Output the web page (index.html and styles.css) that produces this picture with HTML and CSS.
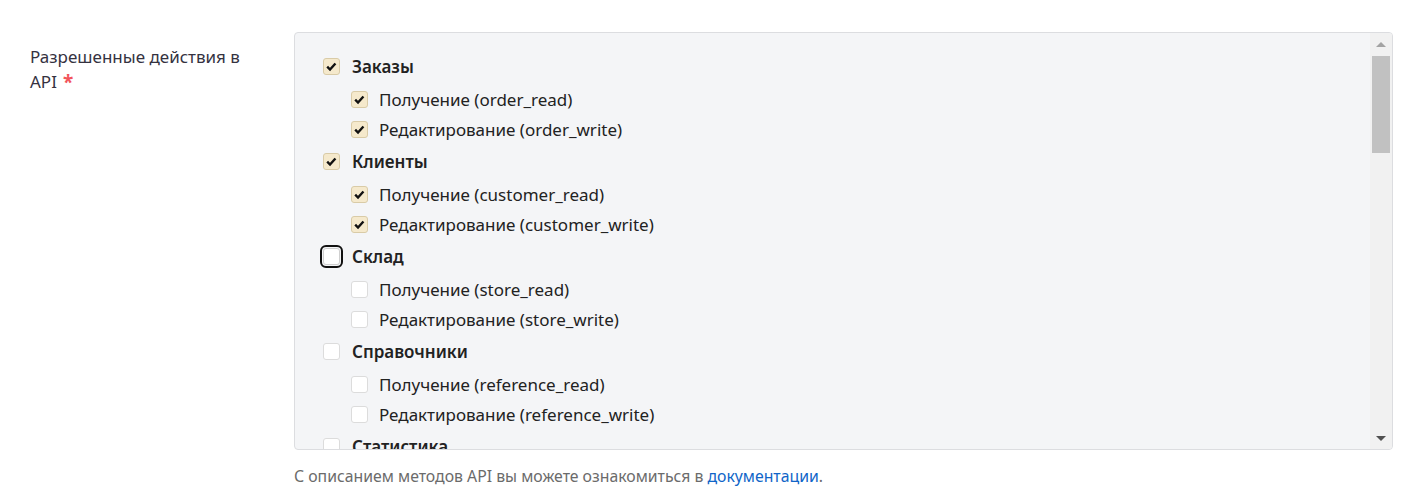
FILE: index.html
```html
<!DOCTYPE html>
<html lang="ru">
<head>
<meta charset="utf-8">
<title>API</title>
<link rel="stylesheet" href="styles.css">
</head>
<body>
<div class="field">
  <div class="label">Разрешенные действия в API<span class="req">*</span></div>
  <div class="control">
    <div class="box">
      <div class="list">
        <div class="group">
          <div class="row head"><span class="cb on"><svg viewBox="0 0 16 16"><path d="M3.4 8.2l3 3.1 5.8-6.6" /></svg></span><span class="t">Заказы</span></div>
          <div class="children">
            <div class="row"><span class="cb on"><svg viewBox="0 0 16 16"><path d="M3.4 8.2l3 3.1 5.8-6.6" /></svg></span><span class="t">Получение (order_read)</span></div>
            <div class="row"><span class="cb on"><svg viewBox="0 0 16 16"><path d="M3.4 8.2l3 3.1 5.8-6.6" /></svg></span><span class="t">Редактирование (order_write)</span></div>
          </div>
        </div>
        <div class="group">
          <div class="row head"><span class="cb on"><svg viewBox="0 0 16 16"><path d="M3.4 8.2l3 3.1 5.8-6.6" /></svg></span><span class="t">Клиенты</span></div>
          <div class="children">
            <div class="row"><span class="cb on"><svg viewBox="0 0 16 16"><path d="M3.4 8.2l3 3.1 5.8-6.6" /></svg></span><span class="t">Получение (customer_read)</span></div>
            <div class="row"><span class="cb on"><svg viewBox="0 0 16 16"><path d="M3.4 8.2l3 3.1 5.8-6.6" /></svg></span><span class="t">Редактирование (customer_write)</span></div>
          </div>
        </div>
        <div class="group">
          <div class="row head"><span class="cb focus"></span><span class="t">Склад</span></div>
          <div class="children">
            <div class="row"><span class="cb"></span><span class="t">Получение (store_read)</span></div>
            <div class="row"><span class="cb"></span><span class="t">Редактирование (store_write)</span></div>
          </div>
        </div>
        <div class="group">
          <div class="row head"><span class="cb"></span><span class="t">Справочники</span></div>
          <div class="children">
            <div class="row"><span class="cb"></span><span class="t">Получение (reference_read)</span></div>
            <div class="row"><span class="cb"></span><span class="t">Редактирование (reference_write)</span></div>
          </div>
        </div>
        <div class="group">
          <div class="row head"><span class="cb"></span><span class="t">Статистика</span></div>
        </div>
      </div>
      <div class="scrollbar">
        <div class="arrow up"></div>
        <div class="track"><div class="thumb"></div></div>
        <div class="arrow down"></div>
      </div>
    </div>
    <div class="hint">С описанием методов API вы можете ознакомиться в <a href="#">документации</a>.</div>
  </div>
</div>
</body>
</html>
```

FILE: styles.css
```css
html, body {
  margin: 0;
  padding: 0;
  background: #ffffff;
}
body {
  font-family: "Noto Sans", "Open Sans", sans-serif;
  font-size: 17px;
  color: #222222;
}
.field {
  display: flex;
  padding: 32px 0 0 30px;
}
.label {
  width: 236px;
  flex: none;
  margin-top: 12px;
  margin-right: 28px;
  line-height: 25px;
  color: #35323f;
}
.req {
  display: inline-block;
  margin: 4px 0 0 6px;
  color: #f2545b;
  font-weight: 700;
  font-size: 19px;
  line-height: 19px;
  vertical-align: top;
}
.control {
  width: 1099px;
}
.box {
  height: 416px;
  border: 1px solid #dcdde0;
  border-radius: 4px;
  background: #f4f5f7;
  display: flex;
  overflow: hidden;
}
.list {
  flex: 1;
  overflow: hidden;
  padding: 17px 0 0 28px;
}
.row {
  display: flex;
  align-items: center;
  height: 30px;
}
.row.head {
  height: 32px;
  font-weight: 600;
}
.children {
  margin: 2px 0 1px 28px;
}
.cb {
  flex: none;
  box-sizing: border-box;
  width: 17px;
  height: 17px;
  border: 1px solid #dcdcdc;
  border-radius: 3px;
  background: #ffffff;
  margin-right: 12px;
  display: flex;
  align-items: center;
  justify-content: center;
}
.cb.on {
  background: #f5e9cc;
  border-color: #d9cba7;
}
.cb svg {
  width: 15px;
  height: 15px;
}
.cb svg path {
  fill: none;
  stroke: #111111;
  stroke-width: 2.5;
}
.cb.focus {
  outline: 2px solid #111111;
  outline-offset: 1px;
  border-color: #cfcfcf;
}
.children .cb {
  margin-right: 11px;
}
.scrollbar {
  flex: none;
  width: 22px;
  background: #f1f1f1;
  display: flex;
  flex-direction: column;
}
.arrow {
  height: 22px;
  display: flex;
  align-items: center;
  justify-content: center;
}
.arrow::before {
  content: "";
  width: 0;
  height: 0;
  border-left: 5px solid transparent;
  border-right: 5px solid transparent;
}
.arrow.up::before {
  border-bottom: 5px solid #a3a3a3;
}
.arrow.down::before {
  border-top: 5px solid #505050;
}
.track {
  flex: 1;
  padding: 1px 2px;
}
.thumb {
  height: 97px;
  background: #c1c1c1;
}
.hint {
  margin-top: 15px;
  color: #6b6b6b;
  font-size: 15.8px;
}
.hint a {
  color: #1065c8;
  text-decoration: none;
}
```
